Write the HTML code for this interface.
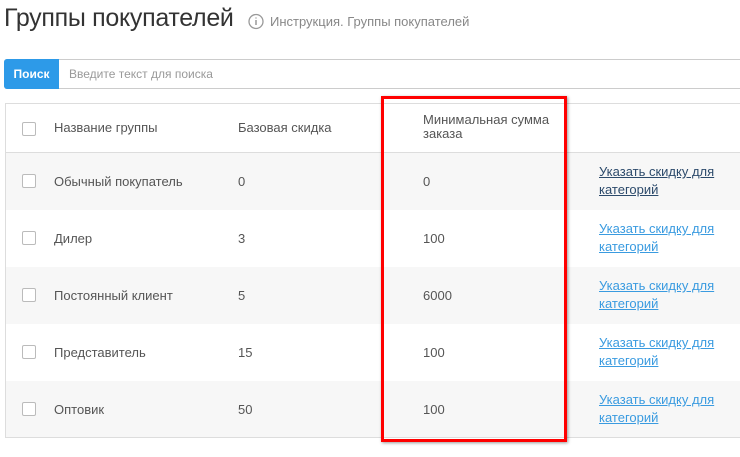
<!DOCTYPE html>
<html><head><meta charset="utf-8"><style>
*{margin:0;padding:0;box-sizing:border-box}
body{width:740px;height:457px;background:#fff;font-family:"Liberation Sans",sans-serif;position:relative;overflow:hidden;color:#555}
.abs{position:absolute}
h1{position:absolute;left:4px;top:4px;font-size:25px;font-weight:normal;color:#333;letter-spacing:-0.3px}
.sub{left:248px;top:14px;font-size:13px;color:#888}
.search{left:4px;top:59px;width:745px;height:30px;border:1px solid #ccc;border-radius:3px}
.btn{left:4px;top:59px;width:55px;height:30px;background:#2d9ae8;color:#fff;font-weight:bold;font-size:12px;line-height:30px;text-align:center;border-radius:3px 0 0 3px}
.ph{left:69px;top:67px;font-size:12px;color:#999}
.tbl{left:5px;top:103px;width:745px;height:335px;border:1px solid #ddd}
.row{position:absolute;left:6px;width:740px;height:57px;font-size:13px;color:#555}
.row span{position:absolute;top:21px}
.cb{position:absolute;left:16px;top:21px;width:14px;height:14px;border:1px solid #bbb;border-radius:2px;background:#fff}
.gray{background:#f7f7f7}
a{position:absolute;left:593px;top:10px;font-size:13px;line-height:18px;color:#3a9be0;text-decoration:underline}
.red{left:381px;top:96px;width:186px;height:346px;border:3px solid #f00;box-shadow:1px 1px 3px rgba(0,0,0,.4)}
</style></head><body>
<h1>Группы покупателей</h1>
<svg class="abs" style="left:247px;top:13px" width="18" height="18" viewBox="0 0 18 18"><circle cx="9" cy="8.5" r="7" fill="none" stroke="#999" stroke-width="1.3"/><path d="M9 7v5M9 4.5v1" stroke="#999" stroke-width="1.5"/></svg>
<div class="abs sub" style="left:270px">Инструкция. Группы покупателей</div>
<div class="abs search"></div><div class="abs btn">Поиск</div><div class="abs ph">Введите текст для поиска</div>
<div class="abs tbl"></div>
<div class="abs" style="left:6px;top:152px;width:740px;height:1px;background:#ddd"></div>
<div class="row" style="top:104px;height:48px"><div class="cb" style="top:18px"></div><span style="left:48px;top:16px">Название группы</span><span style="left:232px;top:16px">Базовая скидка</span><span style="left:417px;top:9px;line-height:14px">Минимальная сумма<br>заказа</span></div>
<div class="row gray" style="top:153px"><div class="cb"></div><span style="left:48px">Обычный покупатель</span><span style="left:232px">0</span><span style="left:417px">0</span><a style="color:#2c4a6b">Указать скидку для<br>категорий</a></div>
<div class="row" style="top:210px"><div class="cb"></div><span style="left:48px">Дилер</span><span style="left:232px">3</span><span style="left:417px">100</span><a>Указать скидку для<br>категорий</a></div>
<div class="row gray" style="top:267px"><div class="cb"></div><span style="left:48px">Постоянный клиент</span><span style="left:232px">5</span><span style="left:417px">6000</span><a>Указать скидку для<br>категорий</a></div>
<div class="row" style="top:324px"><div class="cb"></div><span style="left:48px">Представитель</span><span style="left:232px">15</span><span style="left:417px">100</span><a>Указать скидку для<br>категорий</a></div>
<div class="row gray" style="top:381px;height:56px"><div class="cb"></div><span style="left:48px">Оптовик</span><span style="left:232px">50</span><span style="left:417px">100</span><a>Указать скидку для<br>категорий</a></div>
<div class="abs red"></div>
</body></html>
